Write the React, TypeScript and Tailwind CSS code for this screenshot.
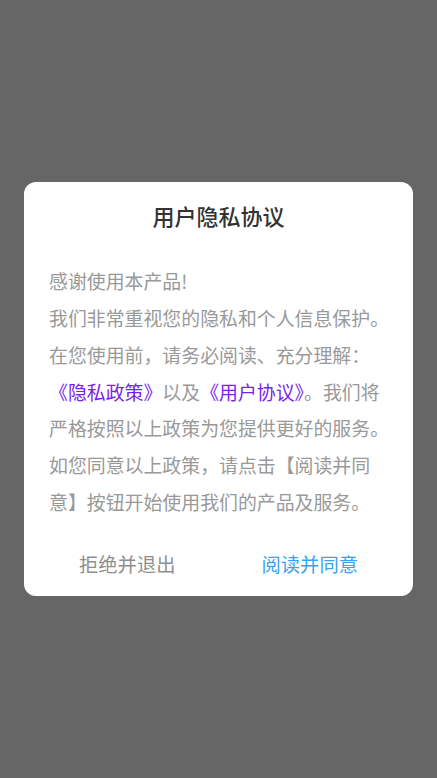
export default function App() {
  const font = { fontFamily: '"Noto Sans CJK SC", "Noto Sans", sans-serif' };

  return (
    <div className="min-h-[778px] w-full bg-[#666666] flex items-center justify-center" style={font}>
      <div className="w-[389px] rounded-[12px] bg-white pt-[20px] pb-[7px]">
        <h1 className="text-center text-[22px] leading-[26px] font-medium text-[#333333]">用户隐私协议</h1>

        <div className="mt-[35px] pl-[25px] pr-[20px] text-[18.9px] leading-[36.8px] text-[#999999] whitespace-nowrap">
          <p>感谢使用本产品!</p>
          <p>我们非常重视您的隐私和个人信息保护。</p>
          <p>在您使用前，请务必阅读、充分理解：</p>
          <p>
            <span className="text-[#7a22ea]">《隐私政策》</span>以及<span className="text-[#7a22ea]">《用户协议》</span>。我们将
          </p>
          <p>严格按照以上政策为您提供更好的服务。</p>
          <p>如您同意以上政策，请点击【阅读并同</p>
          <p>意】按钮开始使用我们的产品及服务。</p>
        </div>

        <div className="mt-[20px] flex px-[12px]">
          <button className="flex-1 h-[48px] text-[19.3px] text-[#8f8f8f]">拒绝并退出</button>
          <button className="flex-1 h-[48px] text-[19.3px] text-[#3aa2f2]">阅读并同意</button>
        </div>
      </div>
    </div>
  );
}
